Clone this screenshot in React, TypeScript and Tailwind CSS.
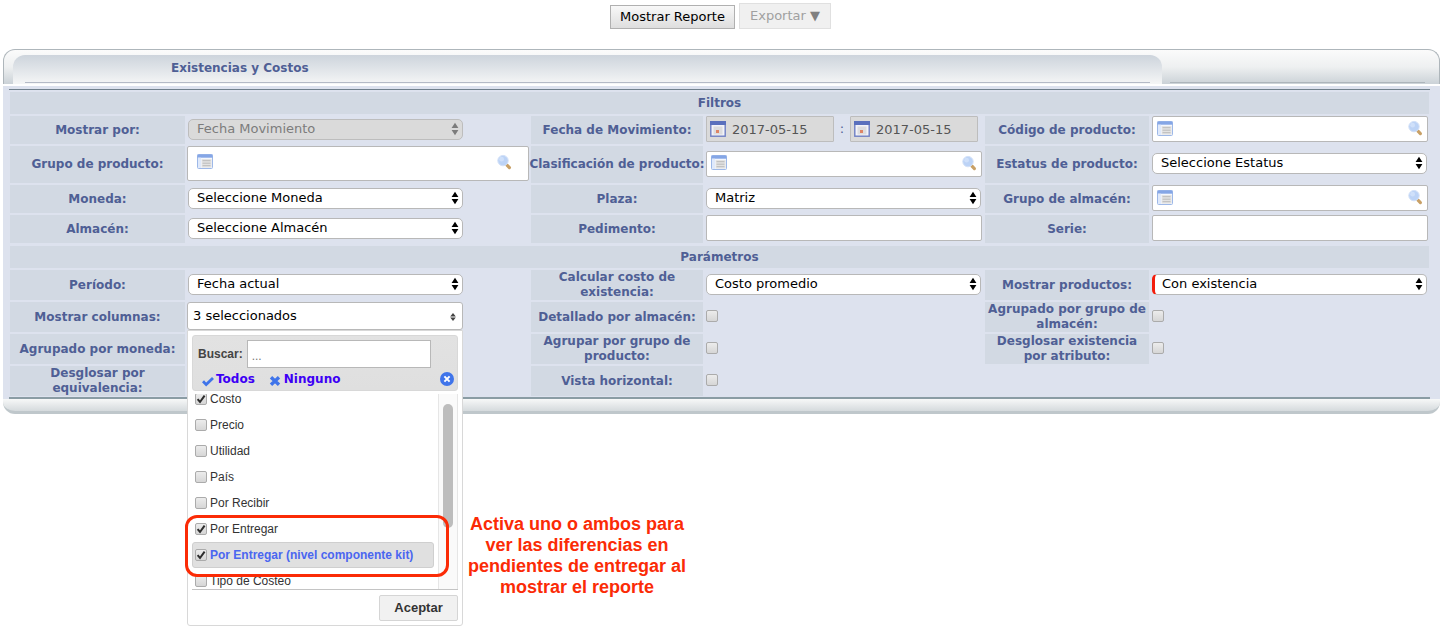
import { useState, FC, ReactNode } from 'react';


// ~ ~ ~ ~ ~ ~ ~ ~ ~ ~ ~ ~ ~ ~ ~ ~ ~ ~ ~ ~ ~ ~ Icons

const IconArrows:FC<{ className?: string }> = ({ className = '' }) => (
  <svg viewBox="0 0 8 14" className={`pointer-events-none absolute h-3.5 w-2 ${className}`} fill="currentColor" aria-hidden="true">
    <path d="M4 0.8 7.4 6H0.6zM4 13.2 0.6 8h6.8z" />
  </svg>
);

const IconList:FC = () => (
  <svg viewBox="0 0 16 15" className="h-[15px] w-4" aria-hidden="true">
    <rect x="0.5" y="0.5" width="15" height="14" rx="1" fill="#f4f7fd" stroke="#9db8e8" />
    <rect x="0.5" y="0.5" width="15" height="3.2" fill="#85a6e6" />
    <rect x="1" y="3.7" width="3" height="10.3" fill="#dfe9fb" />
    <rect x="4.6" y="5" width="10" height="8.6" fill="#e3e3e3" />
    <path d="M5.5 6.7h8M5.5 9.2h8M5.5 11.7h8" stroke="#bbbbbb" />
  </svg>
);

const IconSearch:FC = () => (
  <svg viewBox="0 0 16 16" className="size-4" aria-hidden="true">
    <path d="M11 11.2 13.4 13.6" stroke="#c8a066" strokeWidth="3.2" strokeLinecap="round" />
    <circle cx="7" cy="6.6" r="5.2" fill="#bcd3f6" stroke="#d3e1f8" />
    <circle cx="5.6" cy="5.2" r="2.4" fill="#cfe0fa" />
  </svg>
);

const IconCalendar:FC = () => (
  <svg viewBox="0 0 16 16" className="size-4" aria-hidden="true">
    <rect x="0.8" y="1" width="14.4" height="14.2" fill="#f2f3f8" stroke="#6e7fc4" strokeWidth="1.4" />
    <rect x="0" y="0" width="16" height="4" fill="#5a70bd" />
    <rect x="3.5" y="5.5" width="9" height="8" fill="#dcdcde" />
    <rect x="6" y="9" width="3" height="3" fill="#dd8466" />
  </svg>
);

const IconClose:FC = () => (
  <svg viewBox="0 0 14 14" className="size-3.5" aria-hidden="true">
    <circle cx="7" cy="7" r="7" fill="#3f74ea" />
    <path d="M4.4 4.4 9.6 9.6M9.6 4.4 4.4 9.6" stroke="#ffffff" strokeWidth="2" />
  </svg>
);


// ~ ~ ~ ~ ~ ~ ~ ~ ~ ~ ~ ~ ~ ~ ~ ~ ~ ~ ~ ~ ~ ~ Controls

interface ISelectProps {
  id: string;
  value: string;
  disabled?: boolean;
  required?: boolean;
}

const Select:FC<ISelectProps> = ({ id, value, disabled, required }) => (
  <div className="relative mx-px w-full max-w-[275px]">
    <select
      id={id}
      disabled={disabled}
      className={`block h-[21px] w-full appearance-none rounded-[5px] border pb-0.5 text-[13px] leading-[17px] opacity-100 ${
        disabled ? 'border-[#bdbdbd] bg-[#dadada] text-[#7c7c7c]' : 'border-[#b8b8b8] bg-white text-black'
      } ${required ? 'border-l-3 border-l-[#f31d0c] pl-[7px]' : 'pl-2'}`}
      >
      <option>{value}</option>
    </select>
    <IconArrows className={`right-1 top-[3px] ${disabled ? 'text-[#7c7c7c]' : 'text-black'}`} />
  </div>
);

const Text:FC<{ id: string }> = ({ id }) => (
  <input id={id} type="text" className="h-[26px] w-full rounded-[2px] border border-[#b8b8b8] bg-white px-1.5 text-[13px]" />
);

const Lookup:FC<{ id: string, tall?: boolean }> = ({ id, tall }) => (
  <div className={`flex w-full items-center rounded-[2px] border border-[#b8b8b8] bg-white ${tall ? 'h-[35px] pb-1 pl-[9px] pr-4' : 'h-[26px] pb-0.5 pl-1 pr-1'}`}>
    <button type="button" aria-label="Lista"><IconList /></button>
    <input id={id} type="text" className="min-w-0 flex-1 px-1 text-[13px] outline-none" />
    <button type="button" aria-label="Buscar"><IconSearch /></button>
  </div>
);

const DateBox:FC<{ id: string, label?: string }> = ({ id, label }) => (
  <div className="flex h-[26px] w-32 items-center gap-1.5 rounded-[1px] border border-[#bdbdbd] bg-[#dadada] pl-[3px]">
    <IconCalendar />
    <input id={id} aria-label={label} disabled type="text" defaultValue="2017-05-15" className="min-w-0 flex-1 pt-0.5 text-[13px] text-[#555555]" />
  </div>
);

const Check:FC<{ id: string, checked?: boolean }> = ({ id, checked }) => (
  <span className="relative block size-3 shrink-0">
    <input
      id={id}
      type="checkbox"
      defaultChecked={checked}
      className="peer block size-3 appearance-none rounded-[2px] border border-[#ababab] bg-linear-to-b from-[#ececec] to-[#d6d6d6]"
    />
    <svg viewBox="0 0 12 12" className="pointer-events-none absolute inset-0 hidden peer-checked:block" fill="none" aria-hidden="true">
      <path d="M2.6 6.2 5 9 9.6 2.6" stroke="#2d2d2d" strokeWidth="2" />
    </svg>
  </span>
);


// ~ ~ ~ ~ ~ ~ ~ ~ ~ ~ ~ ~ ~ ~ ~ ~ ~ ~ ~ ~ ~ ~ Form layout

interface IFieldProps {
  id: string;
  label: string;
  height: string;
  children?: ReactNode;
}

const Field:FC<IFieldProps> = ({ id, label, height, children }) => (
  <>
    <label htmlFor={id} className={`flex items-center justify-center bg-[#d2d9e3] text-center text-xs leading-[15px] font-bold text-[#4f5f95] ${height}`}>
      {label}
    </label>
    <div className="flex min-w-0 items-center pb-0.5">{children}</div>
  </>
);

const Section:FC<{ title: string, children: ReactNode }> = ({ title, children }) => (
  <section>
    <h2 className="flex h-[22px] items-center justify-center bg-[#d2d9e3] text-xs font-bold text-[#4f5f95]">
      {title}
    </h2>
    <div className="mt-0.5 grid grid-cols-[175px_342fr_172px_278fr_164px_278fr] gap-0.5">
      {children}
    </div>
  </section>
);


// ~ ~ ~ ~ ~ ~ ~ ~ ~ ~ ~ ~ ~ ~ ~ ~ ~ ~ ~ ~ ~ ~ Column picker

const columns = [
  { id: 'costo', label: 'Costo', checked: true },
  { id: 'precio', label: 'Precio' },
  { id: 'utilidad', label: 'Utilidad' },
  { id: 'pais', label: 'País' },
  { id: 'recibir', label: 'Por Recibir' },
  { id: 'entregar', label: 'Por Entregar', checked: true },
  { id: 'entregar-kit', label: 'Por Entregar (nivel componente kit)', checked: true, active: true },
  { id: 'costeo', label: 'Tipo de Costeo' },
];

const ColumnPicker:FC = () => {
  const [open, setOpen] = useState(true);

  return (
    <div className="relative w-full max-w-[276px]">
      <button
        id="columnas"
        type="button"
        onClick={() => setOpen(!open)}
        className="relative block h-7 w-full rounded-[3px] border border-[#b8b8b8] bg-white pl-[5px] text-left text-[13px] text-black"
        >
        3 seleccionados
        <svg viewBox="0 0 6 8" className="absolute right-1.5 top-2.5 h-2 w-1.5" fill="#444444" aria-hidden="true">
          <path d="M3 0 5.8 3.4H0.2zM3 8 0.2 4.6h5.6z" />
        </svg>
      </button>

      {open && (
        <div className="absolute left-0 top-full z-10 w-full rounded-b-[3px] border border-[#d8d8d8] bg-white p-1 font-['Liberation_Sans',Arial,sans-serif]">
          <div className="h-14 rounded-[3px] border border-[#d8d8d8] bg-linear-to-b from-[#e2e2e2] to-[#dfdfdf] px-[5px] pt-1">
            <div className="flex items-center gap-1">
              <label htmlFor="buscar" className="text-xs font-bold text-[#444444]">Buscar:</label>
              <input id="buscar" type="text" placeholder="..." className="h-7 w-[184px] border border-[#b8b8b8] bg-white px-1 pt-1 text-xs placeholder:text-[#777777]" />
            </div>
            <div className="flex h-[22px] items-center font-['DejaVu_Sans',Verdana,sans-serif] text-xs font-bold text-[#3d00f5]">
              <a href="#todos" className="flex items-center gap-0.5 pl-1">
                <svg viewBox="0 0 12 12" className="mt-1 size-3" fill="none" aria-hidden="true">
                  <path d="M1 6.2 4.2 9.6 11 3" stroke="#3f74ea" strokeWidth="2.8" />
                </svg>
                Todos
              </a>
              <a href="#ninguno" className="flex items-center gap-[3px] pl-3.5">
                <svg viewBox="0 0 12 12" className="mt-1 size-3" fill="none" aria-hidden="true">
                  <path d="M2 2.2 10 9.8M10 2.2 2 9.8" stroke="#3f74ea" strokeWidth="3.4" />
                </svg>
                Ninguno
              </a>
              <button type="button" aria-label="Cerrar" className="-mr-0.5 ml-auto" onClick={() => setOpen(false)}><IconClose /></button>
            </div>
          </div>

          <div className="mt-[3px] flex h-[196px] overflow-hidden border-b border-[#c4c4c4]">
            <ul className="-mt-2 flex-1">
              {columns.map(c => (
                <li
                  key={c.id}
                  className={`mr-1 flex h-[26px] items-center gap-[3px] rounded-[3px] border pl-0.5 text-xs ${
                    c.active ? 'border-[#cfcfcf] bg-[#e0e0e0] font-bold text-[#4a66f0]' : 'border-transparent text-[#333333]'
                  }`}
                  >
                  <Check id={c.id} checked={c.checked} />
                  <label htmlFor={c.id}>{c.label}</label>
                </li>
              ))}
            </ul>
            <div className="w-5 border-x border-[#e6e6e6] bg-[#fafafa] px-1 pt-2.5">
              <div className="h-[124px] rounded-full bg-[#bdbdbd]" />
            </div>
          </div>

          <div className="flex justify-end pt-[5px]">
            <button type="button" className="h-[26px] w-[79px] rounded-[2px] border border-[#d5d5d5] bg-[#f1f1f1] text-[13px] font-bold text-[#333333]">
              Aceptar
            </button>
          </div>

          <div className="pointer-events-none absolute -left-[3px] top-[184px] h-[62px] w-[264px] rounded-xl border-3 border-[#fb2b06]" />
          <p className="absolute left-full top-[183px] w-[230px] text-center text-lg leading-[21px] font-bold text-[#fb2b06]">
            Activa uno o ambos para ver las diferencias en pendientes de entregar al mostrar el reporte
          </p>
        </div>
      )}
    </div>
  );
};


// ~ ~ ~ ~ ~ ~ ~ ~ ~ ~ ~ ~ ~ ~ ~ ~ ~ ~ ~ ~ ~ ~ Page

export const PageReport:FC = () => {
  return (
    <main className="min-h-screen bg-white font-['DejaVu_Sans',Verdana,sans-serif] text-black">

      <div className="flex h-[49px] items-start justify-center gap-1 pt-[3px]">
        <button type="button" className="mt-0.5 h-6 w-[125px] border border-[#b0b0b0] bg-linear-to-b from-[#f8f8f8] to-[#dedede] text-[13px] whitespace-nowrap">
          Mostrar Reporte
        </button>
        <button type="button" disabled className="h-[26px] w-[92px] border border-[#e0e0e0] bg-[#f0f0f0] text-[13px] whitespace-nowrap text-[#a0a0a0]">
          Exportar <span className="text-[#808080]">▼</span>
        </button>
      </div>

      <div className="ml-[3px] mr-px">
        <header className="flex h-[35px] items-end rounded-t-xl border border-b-0 border-[#aeb6bb] bg-linear-to-b from-[#fbfbfb] via-[#eef0f1] to-[#cbd2d7] pl-[9px]">
          <div className="h-[29px] flex-1 rounded-t-xl bg-linear-to-b from-[#cdd4dc] to-[#f5f6f6] px-3">
            <h1 className="h-7 border-b border-[#b4bac6] pl-[146px] pt-1 text-xs leading-[19px] font-bold text-[#4f5f95]">
              Existencias y Costos
            </h1>
          </div>
          <div className="ml-2 mr-3.5 h-0.5 w-[255px] border-t border-[#adb5bb]" />
        </header>

        <form className="border-t-2 border-white bg-[#dde2ee] pl-1.5 pr-2.5 pt-[3px]">
          <div className="flex flex-col gap-[3px] border-b-2 border-t border-b-[#8a9ca4] border-t-[#71818d] px-px pb-px pt-0.5">
            <Section title="Filtros">
              <Field id="mostrar" label="Mostrar por:" height="min-h-7"><Select id="mostrar" value="Fecha Movimiento" disabled /></Field>
              <Field id="fecha" label="Fecha de Movimiento:" height="min-h-7">
                <div className="ml-px flex items-center text-[13px] text-[#4f5f95]">
                  <DateBox id="fecha" />
                  <span className="w-4 text-center">:</span>
                  <DateBox id="fecha-fin" label="Fecha final" />
                </div>
              </Field>
              <Field id="codigo" label="Código de producto:" height="min-h-7"><div className="mx-px w-full"><Lookup id="codigo" /></div></Field>

              <Field id="grupo" label="Grupo de producto:" height="min-h-[37px]"><Lookup id="grupo" tall /></Field>
              <Field id="clasificacion" label="Clasificación de producto:" height="min-h-[37px] whitespace-nowrap"><div className="mx-px w-full"><Lookup id="clasificacion" /></div></Field>
              <Field id="estatus" label="Estatus de producto:" height="min-h-[37px]"><Select id="estatus" value="Seleccione Estatus" /></Field>

              <Field id="moneda" label="Moneda:" height="min-h-7"><Select id="moneda" value="Seleccione Moneda" /></Field>
              <Field id="plaza" label="Plaza:" height="min-h-7"><Select id="plaza" value="Matriz" /></Field>
              <Field id="grupo-almacen" label="Grupo de almacén:" height="min-h-7"><div className="mx-px w-full"><Lookup id="grupo-almacen" /></div></Field>

              <Field id="almacen" label="Almacén:" height="min-h-7"><Select id="almacen" value="Seleccione Almacén" /></Field>
              <Field id="pedimento" label="Pedimento:" height="min-h-7"><div className="mx-px flex w-full"><Text id="pedimento" /></div></Field>
              <Field id="serie" label="Serie:" height="min-h-7"><div className="mx-px flex w-full"><Text id="serie" /></div></Field>
            </Section>

            <Section title="Parámetros">
              <Field id="periodo" label="Período:" height="min-h-[30px]"><Select id="periodo" value="Fecha actual" /></Field>
              <Field id="calcular" label="Calcular costo de existencia:" height="min-h-[30px]"><Select id="calcular" value="Costo promedio" /></Field>
              <Field id="productos" label="Mostrar productos:" height="min-h-[30px]"><Select id="productos" value="Con existencia" required /></Field>

              <Field id="columnas" label="Mostrar columnas:" height="min-h-[30px]"><ColumnPicker /></Field>
              <Field id="detallado" label="Detallado por almacén:" height="min-h-[30px]"><div className="ml-px"><Check id="detallado" /></div></Field>
              <Field id="agrupado-almacen" label="Agrupado por grupo de almacén:" height="min-h-[30px]"><div className="ml-px"><Check id="agrupado-almacen" /></div></Field>

              <Field id="agrupado-moneda" label="Agrupado por moneda:" height="min-h-[30px]"><div className="ml-px"><Check id="agrupado-moneda" /></div></Field>
              <Field id="agrupar-producto" label="Agrupar por grupo de producto:" height="min-h-[30px]"><div className="ml-px"><Check id="agrupar-producto" /></div></Field>
              <Field id="desglosar-existencia" label="Desglosar existencia por atributo:" height="min-h-[30px]"><div className="ml-px"><Check id="desglosar-existencia" /></div></Field>

              <Field id="equivalencia" label="Desglosar por equivalencia:" height="min-h-[30px]"><div className="ml-px"><Check id="equivalencia" /></div></Field>
              <Field id="horizontal" label="Vista horizontal:" height="min-h-[30px]"><div className="ml-px"><Check id="horizontal" /></div></Field>
            </Section>
          </div>
        </form>

        <div className="h-[15px] rounded-b-xl border-b-3 border-[#bfc7cb] bg-linear-to-b from-[#f7f8f8] to-[#d5dadd]" />
      </div>

    </main>
  );
};

// ~ ~ ~ ~ ~ ~ ~ ~ ~ ~ ~ ~ ~ ~ ~ ~ ~ ~ ~ ~ ~ ~ Export

export default PageReport;
